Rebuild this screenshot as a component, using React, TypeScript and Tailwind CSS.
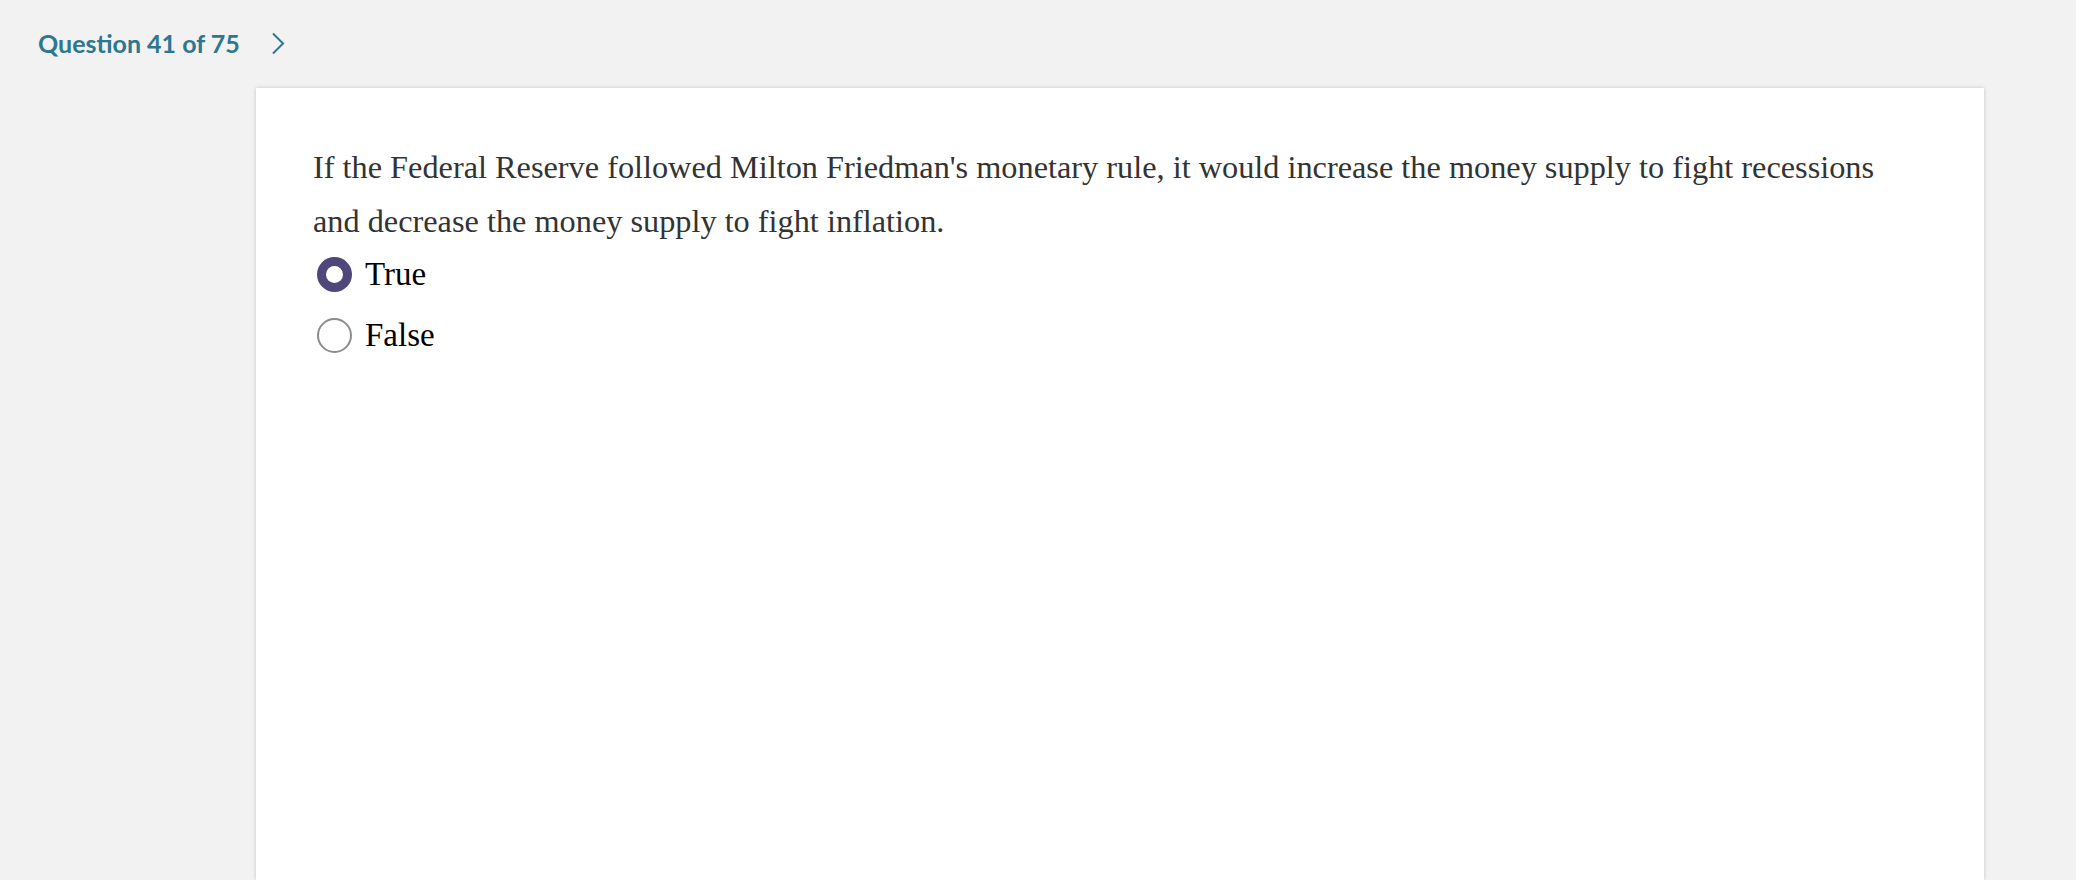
export default function App() {
  const options = [
    { label: "True", checked: true },
    { label: "False", checked: false },
  ];

  return (
    <div className="min-h-[880px] w-full bg-[#f2f2f2] overflow-hidden">
      {/* top bar */}
      <div className="flex h-[88px] items-start pl-[38px] pt-[21px]">
        <span className="font-['Lato',sans-serif] text-[25px] font-bold leading-[44px] text-[#2d7790]">
          Question 41 of 75
        </span>
        <button className="ml-[31px] mt-[11px] text-[#2d7790]">
          <svg width="14" height="23" viewBox="0 0 14 23" fill="none">
            <path d="M2 1.5 L12 11.5 L2 21.5" stroke="currentColor" strokeWidth="2" />
          </svg>
        </button>
      </div>

      {/* question card */}
      <div className="ml-[256px] h-[792px] w-[1728px] bg-white px-[57px] pt-[52px] shadow-[0_0_4px_rgba(0,0,0,0.18)]">
        <p className="max-w-[1600px] font-['Liberation_Serif',serif] text-[32.3px] leading-[54px] text-[#333333]">
          If the Federal Reserve followed Milton Friedman's monetary rule, it would increase the money supply to fight recessions
          and decrease the money supply to fight inflation.
        </p>
        <div className="flex flex-col gap-[9px]">
          {options.map((o) => (
            <label key={o.label} className="flex h-[52px] items-center gap-[13px] pl-[4px]">
              {o.checked ? (
                <span className="flex h-[35px] w-[35px] items-center justify-center rounded-full bg-[#4f4679]">
                  <span className="h-[17px] w-[17px] rounded-full bg-white" />
                </span>
              ) : (
                <span className="h-[35px] w-[35px] rounded-full border-2 border-[#8c8c8c] bg-white" />
              )}
              <span className="font-['Liberation_Serif',serif] text-[33px] leading-[52px] text-black">
                {o.label}
              </span>
            </label>
          ))}
        </div>
      </div>
    </div>
  );
}
